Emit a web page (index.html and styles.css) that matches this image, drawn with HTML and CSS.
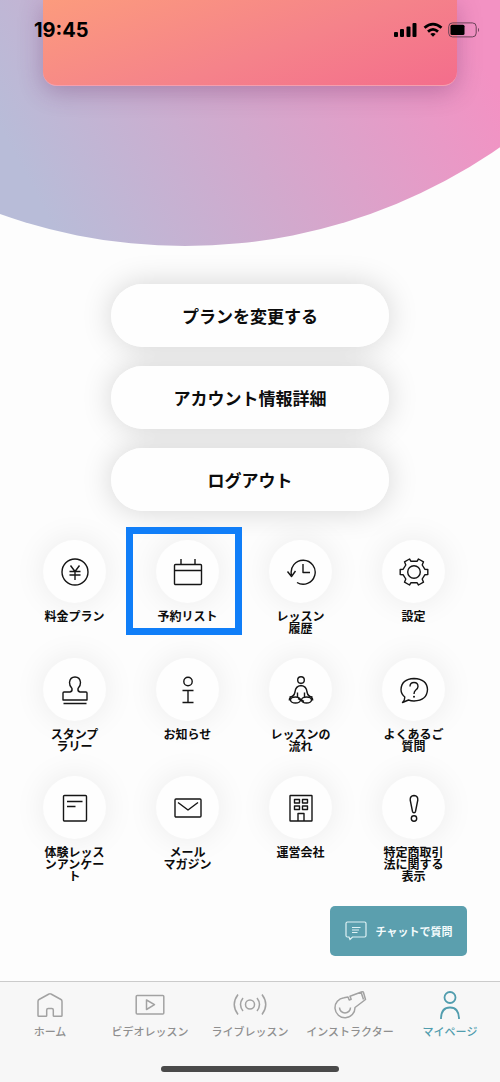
FILE: index.html
```html
<!DOCTYPE html>
<html lang="ja">
<head>
<meta charset="utf-8">
<meta name="viewport" content="width=device-width, initial-scale=1">
<title>マイページ</title>
<link rel="stylesheet" href="styles.css">
</head>
<body>
<header class="hero">
  <div class="plan-card"></div>
  <div class="status">
    <time class="clock">19:45</time>
    <div class="status-icons">
      <svg width="24" height="16" viewBox="0 0 24 16"><rect x="0" y="10" width="4" height="5" rx="1"/><rect x="6" y="7" width="4" height="8" rx="1"/><rect x="12.500" y="4.500" width="4" height="10.500" rx="1"/><rect x="18.500" y="1" width="4" height="14" rx="1"/></svg>
      <svg width="20" height="16" viewBox="0 0 20 16"><path d="M1.500 5.800Q10-1.500 18.500 5.800M5 9.600Q10 5.200 15 9.600" fill="none" stroke="#000" stroke-width="2.800"/><path d="M10 14.800 7.300 12Q10 9.900 12.700 12Z"/></svg>
      <svg width="32" height="16" viewBox="0 0 32 16"><rect x=".7" y=".9" width="27.500" height="14" rx="3.800" fill="none" stroke="#6b4258" stroke-width="1"/><rect x="2.500" y="2.800" width="14" height="10.200" rx="1.500"/><path d="M30 5.800q2 2.200 0 4.400z" fill="#6b4258"/></svg>
    </div>
  </div>
</header>

<main class="content">
  <div class="actions">
    <button class="pill" type="button">プランを変更する</button>
    <button class="pill" type="button">アカウント情報詳細</button>
    <button class="pill" type="button">ログアウト</button>
  </div>

  <nav class="menu" aria-label="メニュー">
    <a class="item" href="#"><span class="disc"><svg class="icon" viewBox="0 0 32 32"><circle cx="16" cy="16" r="13"/><path d="M11.500 9.500 16 15.500l4.500-6M16 15.500v8.500M10.500 15.500h11M10.500 19h11"/></svg></span><span class="label">料金プラン</span></a>
    <a class="item item-selected" href="#"><span class="disc"><svg class="icon" viewBox="0 0 32 32"><rect x="2.500" y="8.500" width="27" height="20" rx="1"/><path d="M2.500 14.500h27M9 8.500V3M23 8.500V3"/></svg></span><span class="label">予約リスト</span></a>
    <a class="item" href="#"><span class="disc"><svg class="icon" viewBox="0 0 32 32"><path d="M6.500 19A12 12 0 1 1 12 26.500M2.500 15.500 6.500 20.500l4-5.500M18 8v8.500h7"/></svg></span><span class="label">レッスン<br>履歴</span></a>
    <a class="item" href="#"><span class="disc"><svg class="icon" viewBox="0 0 32 32"><circle cx="16" cy="16" r="6.300"/><path d="M11.500 3 13 5.300h6L20.500 3l5 2.800-1.300 3.200 2.600 4.200 3 .300v5l-3 .300-2.600 4.200 1.300 3.200-5 2.800-1.500-2.300h-6L11.500 29l-5-2.800L7.800 23l-2.600-4.200-3-.3v-5l3-.3L7.800 9 6.500 5.800Z"/></svg></span><span class="label">設定</span></a>

    <a class="item" href="#"><span class="disc"><svg class="icon" viewBox="0 0 32 32"><path d="M4 26v-7q0-1 1-1h6q2.500-.5 2-3.500-2.700-2.800-2.500-6Q11 3 16 3t5.500 5.500q.2 3.200-2.500 6-.5 3 2 3.500h6q1 0 1 1v7ZM4.500 29.500h23"/></svg></span><span class="label">スタンプ<br>ラリー</span></a>
    <a class="item" href="#"><span class="disc"><svg class="icon" viewBox="0 0 32 32"><circle cx="16" cy="7.500" r="4.200"/><path d="M10.500 16.500h11M16 16.500v12M10.500 28.500h11"/></svg></span><span class="label">お知らせ</span></a>
    <a class="item" href="#"><span class="disc"><svg class="icon" viewBox="0 0 32 32"><circle cx="16" cy="6" r="3.300"/><path d="M4.500 23q4.500 0 5.500-5 .5-6 6-6.500 5.500.5 6 6.500 1 5 5.500 5M12.500 18.500V23M19.500 18.500V23"/><ellipse cx="10.500" cy="26" rx="5" ry="3"/><ellipse cx="21.500" cy="26" rx="5" ry="3"/><path d="M6 23.500q-2 1-1.500 3M26 23.500q2 1 1.500 3M13 24.500l6 3"/></svg></span><span class="label">レッスンの<br>流れ</span></a>
    <a class="item" href="#"><span class="disc"><svg class="icon" viewBox="0 0 32 32"><path d="M6.800 23Q3 20 3 15.500 3.500 5 16 4.500 29 5 29.500 15.500 29 26.500 16 27q-3 0-5.500-1L4.500 28.500Q7 26 6.800 23Z"/><path d="M12 12.500Q12 8.500 16 8.500t4 4q0 2-2.200 3.500Q16 17.500 16 20"/><circle class="dot" cx="16" cy="22.800" r="1"/></svg></span><span class="label">よくあるご<br>質問</span></a>

    <a class="item" href="#"><span class="disc"><svg class="icon" viewBox="0 0 32 32"><rect x="4.500" y="3.500" width="23" height="25.500" rx="1"/><path d="M8 9.500h15.500M8 14.500h8.500"/></svg></span><span class="label">体験レッス<br>ンアンケー<br>ト</span></a>
    <a class="item" href="#"><span class="disc"><svg class="icon" viewBox="0 0 32 32"><rect x="3" y="7" width="26" height="18" rx="1"/><path d="M6 10.500 16 18l10-7.500"/></svg></span><span class="label">メール<br>マガジン</span></a>
    <a class="item" href="#"><span class="disc"><svg class="icon" viewBox="0 0 32 32"><rect x="5" y="3.500" width="22" height="25.500" rx=".5"/><path d="M9.500 7.500h5v3.500h-5zM17.500 7.500h5v3.500h-5zM9.500 14h5v3.500h-5zM17.500 14h5v3.500h-5zM13 29v-7.500h6V29"/></svg></span><span class="label">運営会社</span></a>
    <a class="item" href="#"><span class="disc"><svg class="icon" viewBox="0 0 32 32"><path d="M16 3.500q4 .3 3.800 4.500L17.500 19.500q-.3 1.200-1.500 1.200t-1.500-1.200L12.200 8Q12 3.800 16 3.500Z"/><circle cx="16" cy="26.500" r="2.700"/></svg></span><span class="label">特定商取引<br>法に関する<br>表示</span></a>
  </nav>

  <button class="chat" type="button">
    <svg width="22" height="20" viewBox="0 0 22 20"><path d="M2.500 1h17q1.500 0 1.500 1.500v12q0 1.500-1.500 1.500H7.500L5 18.500 4 16H2.500Q1 16 1 14.500v-12Q1 1 2.500 1ZM7 6.500h8.500M7 9h7M7 11.500h5.500"/></svg>
    チャットで質問
  </button>
</main>

<footer class="tabbar">
  <nav class="tabs" aria-label="タブ">
    <a class="tab" href="#"><svg class="tab-icon" viewBox="0 0 34 32"><path d="M5 27.500V13.500q0-1.500 1-2L16 6q1-.7 2 0l10 5.500q1 .5 1 2v14q0 .8-.8.800H21q-.7 0-.7-.8V22q0-1.500-1.500-1.500h-3.600q-1.500 0-1.500 1.500v5.500q0 .8-.7.800H5.800q-.8 0-.8-.8Z"/></svg>ホーム</a>
    <a class="tab" href="#"><svg class="tab-icon" viewBox="0 0 34 32"><rect x="3.200" y="7.500" width="27.600" height="18.500" rx="1"/><path d="M13.500 12v9.500l8-4.800Z"/></svg>ビデオレッスン</a>
    <a class="tab" href="#"><svg class="tab-icon" viewBox="0 0 34 32"><circle cx="17" cy="16.500" r="4.500"/><path d="M10 10q-5 6.500 0 13M5 6.500q-7.500 10 0 20M24 10q5 6.500 0 13M29 6.500q7.500 10 0 20"/></svg>ライブレッスン</a>
    <a class="tab" href="#"><svg class="tab-icon" viewBox="0 0 34 32"><path d="M11 9.800A10 10 0 1 0 22 19.500L32.500 11.500 30.500 4.500Q30 3.300 29 3.800L17 8.200l1.200 3-2 .8-1.200-3ZM6.500 19.500a5.500 5.500 0 0 0 11 0M28 4l2.500 7.500"/></svg>インストラクター</a>
    <a class="tab tab-active" href="#" aria-current="page"><svg class="tab-icon" viewBox="0 0 34 32"><circle cx="17" cy="9.500" r="5.500"/><path d="M8 31Q8 19.500 17 19.500T26 31"/></svg>マイページ</a>
  </nav>
  <div class="home-bar"></div>
</footer>
</body>
</html>
```
FILE: styles.css
```css
* {
  box-sizing: border-box;
}

body {
  margin: 0;
  min-height: 100vh;
  display: flex;
  flex-direction: column;
  background: #fdfdfd;
  color: #0c0c0c;
  font-family: "Noto Sans CJK JP", sans-serif;
  overflow-x: hidden;
}

a {
  color: inherit;
  text-decoration: none;
}

button {
  border: 0;
  font-family: inherit;
  cursor: pointer;
}

.hero {
  display: grid;
  padding-bottom: 160px;
  background: linear-gradient(62deg, #b8bcd8 10%, #d2a9cd 48%, #f392c3 92%);
  clip-path: circle(552px at 37% -306px);
}

.plan-card,
.status {
  grid-area: 1 / 1;
}

.plan-card {
  height: 86px;
  margin: 0 43px;
  border-bottom: 1px solid #f59fae;
  border-radius: 0 0 14px 14px;
  background: linear-gradient(160deg, #fc9b7d 0%, #f5838a 55%, #f46d8c 100%);
  box-shadow: 0 6px 24px rgba(90, 30, 90, 0.3);
}

.status {
  display: flex;
  justify-content: space-between;
  align-items: flex-start;
  padding: 18px 20px 0 34px;
  z-index: 1;
}

.clock {
  color: #000;
  font: 700 20px/24px Inter, sans-serif;
}

.status-icons {
  display: flex;
  gap: 5px;
  padding-top: 4px;
}

.content {
  display: flex;
  flex-direction: column;
}

.actions {
  display: flex;
  flex-direction: column;
  gap: 19px;
  margin: 38px 111px 0;
  isolation: isolate;
}

.pill {
  position: relative;
  height: 63px;
  border-radius: 32px;
  background: #fefefe;
  color: #0c0c0c;
  font-size: 17px;
  font-weight: 700;
}

/* Shadow sits below every pill so that neighbours stay clean. */
.pill::before {
  content: "";
  position: absolute;
  inset: 0;
  z-index: -1;
  border-radius: inherit;
  box-shadow: 0 0 30px rgba(0, 0, 0, 0.17);
}

.menu {
  display: grid;
  grid-template-columns: repeat(4, 1fr);
  row-gap: 24px;
  margin: 29px 30px 0 18px;
}

.item {
  position: relative;
  display: flex;
  flex-direction: column;
  align-items: center;
  gap: 7px;
}

.item-selected::after {
  content: "";
  position: absolute;
  inset: -13px 2px -1px -5px;
  border: 7px solid #107ef8;
}

.disc {
  display: grid;
  place-items: center;
  width: 63px;
  height: 63px;
  border-radius: 50%;
  background: #fefefe;
  box-shadow: 0 0 32px rgba(0, 0, 0, 0.08);
}

.icon {
  width: 32px;
  height: 32px;
  fill: none;
  stroke: #151515;
  stroke-width: 1.4;
  stroke-linejoin: round;
}

.icon .dot {
  fill: #151515;
  stroke: none;
}

.label {
  font-size: 12px;
  font-weight: 700;
  line-height: 12px;
  text-align: center;
  white-space: nowrap;
}

.chat {
  display: flex;
  align-items: center;
  justify-content: center;
  gap: 9px;
  width: 137px;
  height: 50px;
  margin: 24px 33px 24px auto;
  padding: 0;
  border-radius: 5px;
  background: #5b9fae;
  color: #f4fbfc;
  font-size: 11px;
  font-weight: 700;
}

.chat svg {
  fill: none;
  stroke: #dff2f5;
  stroke-width: 1.2;
}

.tabbar {
  margin-top: auto;
  padding-bottom: 10px;
  border-top: 1px solid #cbcbcb;
  background: #f7f7f7;
}

.tabs {
  display: grid;
  grid-template-columns: repeat(5, 1fr);
}

.tab {
  display: flex;
  flex-direction: column;
  align-items: center;
  gap: 2px;
  padding-top: 6px;
  color: #8f8f8f;
  font-size: 11px;
  font-weight: 500;
  line-height: 18px;
  white-space: nowrap;
}

.tab-active {
  color: #519dae;
}

.tab-icon {
  width: 34px;
  height: 32px;
  fill: none;
  stroke: #a2a2a2;
  stroke-width: 1.5;
  stroke-linejoin: round;
}

.tab-active .tab-icon {
  stroke: #519dae;
  stroke-width: 1.8;
}

.home-bar {
  width: 178px;
  height: 6px;
  margin: 26px auto 0;
  border-radius: 3px;
  background: #4a4a4a;
}
```
